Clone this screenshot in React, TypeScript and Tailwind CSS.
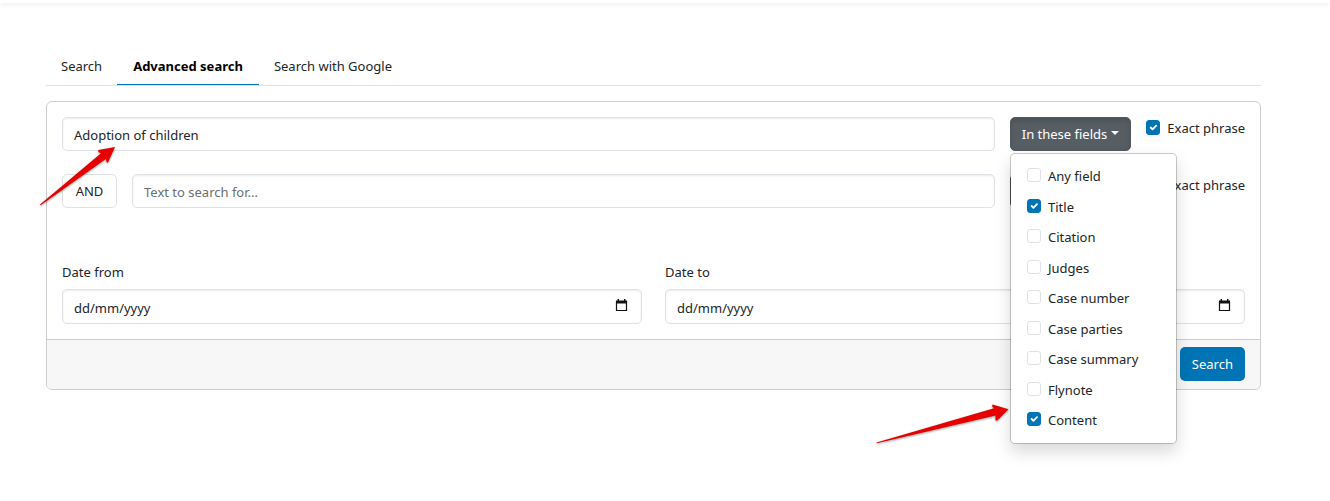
import { useState } from "react";

const FIELDS = [
  "Any field",
  "Title",
  "Citation",
  "Judges",
  "Case number",
  "Case parties",
  "Case summary",
  "Flynote",
  "Content",
];

const inputClass =
  "w-full min-w-0 rounded-[5px] border border-[#dee2e6] bg-white px-[11px] pt-0.5 text-[#212529] shadow-[inset_0_1px_2px_rgba(0,0,0,0.075)] outline-none placeholder:opacity-100";

function Check({ id, label, initial = false, size }: { id: string; label: string; initial?: boolean; size: "sm" | "md" }) {
  const [on, setOn] = useState(initial);
  return (
    <div className="flex items-center gap-[7px]">
      <span className={size === "md" ? "relative -mt-0.5 block h-[15px] w-[15px]" : "relative -mt-0.5 block h-[14px] w-[14px]"}>
        <input
          id={id}
          type="checkbox"
          checked={on}
          onChange={() => setOn(!on)}
          className="block h-full w-full appearance-none rounded-[3px] border border-[#dee2e6] bg-white checked:border-[#0074b4] checked:bg-[#0074b4]"
        />
        {on && (
          <svg viewBox="0 0 20 20" className="pointer-events-none absolute inset-0 h-full w-full p-px" fill="none" stroke="#fff" strokeWidth="3" strokeLinecap="round" strokeLinejoin="round" aria-hidden="true">
            <path d="m6 10 3 3 6-6" />
          </svg>
        )}
      </span>
      <label htmlFor={id} className="whitespace-nowrap leading-5">
        {label}
      </label>
    </div>
  );
}

function FieldsButton({ open, onClick }: { open: boolean; onClick?: () => void }) {
  return (
    <button
      type="button"
      aria-expanded={open}
      onClick={onClick}
      className="flex h-[34px] w-full items-center justify-center gap-1 rounded-[5px] border border-[#51585e] bg-[#565e64] pt-0.5 text-white shadow-[inset_0_3px_5px_rgba(0,0,0,0.125)]"
    >
      <span className="whitespace-nowrap">In these fields</span>
      <svg width="8" height="4" viewBox="0 0 8 4" className="-mt-1" aria-hidden="true">
        <path d="M0 0h8L4 4z" fill="#fff" />
      </svg>
    </button>
  );
}

function DateField({ id, label }: { id: string; label: string }) {
  return (
    <div>
      <label htmlFor={id} className="block leading-5">
        {label}
      </label>
      <div className="relative mt-[7px]">
        <input id={id} type="text" placeholder="dd/mm/yyyy" className={inputClass + " h-[35px] placeholder:text-[#212529]"} />
        <button type="button" aria-label={"Choose " + label.toLowerCase()} className="absolute top-2.5 right-[14px]">
          <svg width="13" height="13" viewBox="0 0 13 13" className="block" aria-hidden="true">
            <path d="M1.5 2.500h10v9h-10z" fill="none" stroke="#111" strokeWidth="1.2" />
            <path d="M1 1.500h11v3H1zM2.600 0h1.400v2H2.600zM9 0h1.400v2H9z" fill="#111" />
          </svg>
        </button>
      </div>
    </div>
  );
}

export default function App() {
  const [open, setOpen] = useState(true);
  return (
    <div className="relative font-['Noto_Sans','Segoe_UI',sans-serif] text-[13px] text-[#212529]">
      <header className="h-[3px] bg-white shadow-[0_2px_4px_rgba(0,0,0,0.08)]" />
      <main className="pt-[44px] pr-[69px] pb-[111px] pl-[46px]">
        <nav className="flex border-b border-[#dee2e6]">
          <a href="#search" className="px-[15px] pt-[9px] pb-2 leading-5">
            Search
          </a>
          <a href="#advanced" className="border-b border-[#0074b4] px-4 pt-[9px] pb-2 leading-5 font-bold text-black">
            Advanced search
          </a>
          <a href="#google" className="px-[15px] pt-[9px] pb-2 leading-5">
            Search with Google
          </a>
        </nav>

        <form className="mt-[15px] rounded-[6px] border border-[#cccdce]" onSubmit={(e) => e.preventDefault()}>
          <div className="p-[15px]">
            <div className="grid grid-cols-[1fr_121px_99px] items-start gap-x-[15px] gap-y-[23px]">
              <input aria-label="Search text" defaultValue="Adoption of children" className={inputClass + " h-[34px]"} />
              <div className="relative">
                <FieldsButton open={open} onClick={() => setOpen(!open)} />
                {open && (
                  <div className="absolute top-9 left-0 z-10 flex h-[291px] w-[167px] flex-col justify-between rounded-[5px] border border-black/20 bg-white bg-clip-padding px-4 pt-3 pb-[13px] shadow-[0_8px_16px_rgba(0,0,0,0.15)]">
                    {FIELDS.map((f) => (
                      <Check key={f} id={"field-" + f} label={f} initial={f === "Title" || f === "Content"} size="sm" />
                    ))}
                  </div>
                )}
              </div>
              <div className="pt-px">
                <Check id="exact-1" label="Exact phrase" initial size="md" />
              </div>

              <div className="flex gap-[15px]">
                <button type="button" className="h-[34px] w-[55px] shrink-0 rounded-[5px] border border-[#dee2e6] pt-0.5">
                  AND
                </button>
                <input aria-label="Second search text" placeholder="Text to search for..." className={inputClass + " h-[34px] placeholder:text-[#6a6e72]"} />
              </div>
              <FieldsButton open={false} />
              <div className="pt-px">
                <Check id="exact-2" label="Exact phrase" size="md" />
              </div>
            </div>

            <div className="mt-[54px] grid grid-cols-2 gap-x-[23px]">
              <DateField id="date-from" label="Date from" />
              <DateField id="date-to" label="Date to" />
            </div>
          </div>
          <div className="flex justify-end rounded-b-[5px] border-t border-[#cccdce] bg-[#f7f7f7] px-[15px] pt-[7px] pb-2">
            <button type="submit" className="h-[34px] rounded-[5px] bg-[#0074b4] px-3 pt-0.5 text-white">
              Search
            </button>
          </div>
        </form>
      </main>

      <svg width="80" height="62" viewBox="38 145 80 62" className="pointer-events-none absolute top-[145px] left-[38px] z-20 drop-shadow-[0_1px_1px_rgba(0,0,0,0.4)]" aria-hidden="true">
        <path d="M40 204.500 101 153.200 98.300 152 98.300 150 115 147 108 162.500 106.800 162.500 105.800 159 40.700 205.200z" fill="#e60000" />
      </svg>
      <svg width="136" height="44" viewBox="875 402 136 44" className="pointer-events-none absolute top-[402px] left-[875px] z-20 drop-shadow-[0_1px_1px_rgba(0,0,0,0.4)]" aria-hidden="true">
        <path d="M876.500 442.500 994 408.300 992 406.300 992.500 404.500 1008.500 409.300 997 420.800 995.500 420 995.500 415.500 877 443.200z" fill="#e60000" />
      </svg>
    </div>
  );
}
